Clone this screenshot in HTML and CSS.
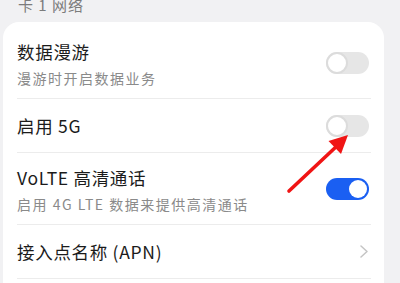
FILE: index.html
```html
<!DOCTYPE html>
<html>
<head>
  <meta charset="UTF-8">
  <title>移动网络</title>
  <link rel="stylesheet" href="styles.css">
</head>
<body>
  <div class="section-title">卡 1 网络</div>

  <div class="card">
    <div class="row">
      <div class="text">
        <div class="title">数据漫游</div>
        <div class="desc">漫游时开启数据业务</div>
      </div>
      <div class="switch"></div>
    </div>
    <div class="row single">
      <div class="text">
        <div class="title">启用 5G</div>
      </div>
      <div class="switch"></div>
    </div>
    <div class="row">
      <div class="text">
        <div class="title">VoLTE 高清通话</div>
        <div class="desc">启用 4G LTE 数据来提供高清通话</div>
      </div>
      <div class="switch on"></div>
    </div>
    <div class="row single">
      <div class="text">
        <div class="title">接入点名称 (APN)</div>
      </div>
      <svg class="chevron" width="8" height="13" viewBox="0 0 8 13">
        <path d="M1 1 L7 6.5 L1 12" fill="none" stroke="#c4c4c4" stroke-width="1.5" stroke-linecap="round" stroke-linejoin="round"/>
      </svg>
    </div>
  </div>

  <!-- 红色箭头标注 -->
  <svg class="arrow" width="400" height="283" viewBox="0 0 400 283">
    <line x1="289" y1="191" x2="338" y2="145" stroke="#f01414" stroke-width="3.6" stroke-linecap="round"/>
    <polygon points="348,135 328.5,141 341,154" fill="#f01414"/>
  </svg>
</body>
</html>
```

FILE: styles.css
```css
/* 设置页面样式 */
body {
  margin: 0;
  background-color: #f1f1f3;
  font-family: "Noto Sans CJK SC", "Noto Sans", sans-serif;
  color: #1b1b1b;
  overflow: hidden;
  height: 283px;
  position: relative;
}
.section-title {
  margin-top: -5px;
  padding: 0 18px 7px;
  line-height: 20px;
  font-size: 15px;
  color: #7c7c7c;
  letter-spacing: 1px;
}
.card {
  margin-left: 3px;
  width: 381px;
  box-sizing: border-box;
  padding: 5px 13px 0 14px;
  background-color: #fff;
  border-radius: 16px 16px 0 0;
  height: 300px;
}
.row {
  display: flex;
  align-items: center;
  justify-content: space-between;
  height: 72px;
  box-sizing: border-box;
  border-bottom: 1px solid #ececec;
}
.row .text {
  padding-top: 3px;
}
.row.single {
  height: 54px;
}
.row.single .text {
  padding-top: 1px;
}
.title {
  font-size: 17.5px;
  line-height: 26px;
  letter-spacing: 0.7px;
}
.desc {
  margin-top: 2px;
  font-size: 14px;
  line-height: 22px;
  color: #8a8a8a;
  letter-spacing: 1.5px;
}
.switch {
  width: 43px;
  height: 22px;
  border-radius: 11px;
  background-color: #e6e6e6;
  position: relative;
  flex-shrink: 0;
  margin-right: 2px;
}
.switch::after {
  content: "";
  position: absolute;
  left: 0;
  top: 0;
  width: 18px;
  height: 18px;
  border-radius: 50%;
  background-color: #fff;
  border: 2px solid #dcdcdc;
}
.switch.on {
  background-color: #1a5ff2;
}
.switch.on::after {
  left: auto;
  right: 2px;
  top: 2px;
  border: none;
}
.chevron {
  margin-right: 3px;
}
.arrow {
  position: absolute;
  left: 0;
  top: 0;
}
```
